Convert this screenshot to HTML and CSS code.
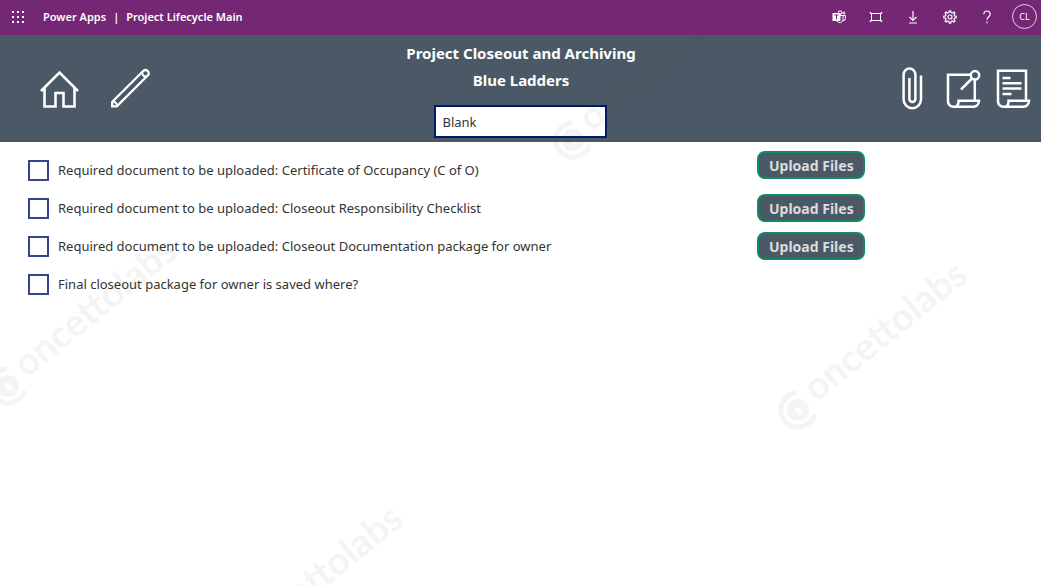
FILE: index.html
```html
<!DOCTYPE html>
<html lang="en">
<head>
    <meta charset="UTF-8">
    <meta name="viewport" content="width=device-width, initial-scale=1.0">
    <title>Project Lifecycle Main</title>
    <link rel="stylesheet" href="styles.css">
</head>
<body>
    <div class="topbar">
        <button class="icon-btn" aria-label="App launcher">
            <svg width="14" height="14" viewBox="0 0 14 14" fill="#fff">
                <path d="M1 1h2v2H1zM6 1h2v2H6zM11 1h2v2h-2zM1 6h2v2H1zM6 6h2v2H6zM11 6h2v2h-2zM1 11h2v2H1zM6 11h2v2H6zM11 11h2v2h-2z"/>
            </svg>
        </button>
        <div class="app-name">
            <span>Power Apps</span>
            <span>|</span>
            <span>Project Lifecycle Main</span>
        </div>
        <div class="tools">
            <button class="icon-btn" aria-label="Teams">
                <svg width="14" height="14" viewBox="0 0 14 14" fill="none" stroke="#fff">
                    <circle cx="8" cy="2.6" r="1.8"/>
                    <circle cx="11.8" cy="3.1" r="1.1"/>
                    <path d="M8 5.5h3v4a3.2 3.2 0 0 1-6 1.5M11 5.5h2.4v3a2 2 0 0 1-2.4 2"/>
                    <rect x="0.5" y="3" width="8" height="8" rx="0.5" fill="#fff" stroke="none"/>
                    <path d="M2.4 5h4.2M4.5 5v4.4" stroke="#742774"/>
                </svg>
            </button>
            <button class="icon-btn" aria-label="Fit to page">
                <svg width="14" height="14" viewBox="0 0 14 14" fill="none" stroke="#fff">
                    <rect x="2.5" y="3.5" width="9" height="7"/>
                    <path d="M3 4L.8 2.4M11 4l2.2-1.6M3 10L.8 11.6M11 10l2.2 1.6" stroke-width="1.5"/>
                </svg>
            </button>
            <button class="icon-btn" aria-label="Download">
                <svg width="14" height="14" viewBox="0 0 14 14" fill="none" stroke="#fff" stroke-width="1.2">
                    <path d="M7 1v9.5M3.5 7L7 10.5 10.5 7M3 13h8"/>
                </svg>
            </button>
            <button class="icon-btn" aria-label="Settings">
                <svg width="14" height="14" viewBox="0 0 14 14" fill="none" stroke="#fff" stroke-width="1.2" stroke-linejoin="round">
                    <path d="M6 2.5L6.2.8h1.6L8 2.5l1.4.6 1.4-1.1 1.2 1.2-1.1 1.4.6 1.4 1.7.2v1.6l-1.7.2-.6 1.4 1.1 1.4-1.2 1.2-1.4-1.1-1.4.6-.2 1.7H6.2L6 11.5l-1.4-.6L3.2 12 2 10.8l1.1-1.4L2.5 8 .8 7.8V6.2L2.5 6l.6-1.4L2 3.2 3.2 2l1.4 1.1z"/>
                    <circle cx="7" cy="7" r="2"/>
                </svg>
            </button>
            <button class="icon-btn" aria-label="Help">
                <svg width="14" height="14" viewBox="0 0 14 14" fill="none" stroke="#fff" stroke-width="1.2">
                    <path d="M3.8 4.2a3.2 3.2 0 0 1 6.4 0c0 2.4-3.2 2.8-3.2 5.6"/>
                    <path d="M7 11.6v1.6"/>
                </svg>
            </button>
            <button class="avatar">CL</button>
        </div>
    </div>

    <header class="header">
        <div class="header-icons">
            <button class="big-btn" aria-label="Home">
                <svg width="40" height="44" viewBox="0 0 40 44" fill="none" stroke="#fff" stroke-width="2.6">
                    <path d="M1 24L19.5 5.5 38 24"/>
                    <path d="M4.5 21v18.5h11V26h8v13.5h11V21"/>
                </svg>
            </button>
            <button class="big-btn" aria-label="Edit">
                <svg width="40" height="44" viewBox="0 0 40 44" fill="none" stroke="#fff" stroke-width="2.3">
                    <path d="M2.2 39.3V35L33.4 3.8a3.2 3.2 0 0 1 4.5 4.5L6.8 39.3z"/>
                    <path d="M3 35a3.2 3.2 0 0 1 3.8 3.8M32.4 5.2a3.4 3.4 0 0 0 4.2 4.2" stroke-width="2"/>
                </svg>
            </button>
        </div>
        <div class="header-title">
            <h1>Project Closeout and Archiving</h1>
            <h2>Blue Ladders</h2>
            <input type="text" value="Blank" aria-label="Closeout status" spellcheck="false">
        </div>
        <div class="header-icons right">
            <button class="big-btn" aria-label="Attachments">
                <svg width="40" height="44" viewBox="0 0 40 44" fill="none" stroke="#fff" stroke-width="2.5">
                    <path d="M26 8.5v24a8.7 8.7 0 0 1-17.4 0V7.5a5.8 5.8 0 0 1 11.8 0V32a3 3 0 0 1-6 0V11"/>
                </svg>
            </button>
            <button class="big-btn" aria-label="Add note">
                <svg width="40" height="44" viewBox="0 0 40 44" fill="none" stroke="#fff" stroke-width="2.5">
                    <path d="M25.5 7.7H3V34a5.5 5.5 0 0 0 5.5 5.8h20a6 6 0 0 0 5.5-6H13.5v1.5a4.5 4.5 0 0 1-5 4.5M29.8 13v20"/>
                    <circle cx="30" cy="8.3" r="4.2"/>
                    <path d="M27 11.5L16 22.5"/>
                </svg>
            </button>
            <button class="big-btn" aria-label="Document">
                <svg width="40" height="44" viewBox="0 0 40 44" fill="none" stroke="#fff" stroke-width="2.5">
                    <path d="M31 33.5V3.8H3V34a5.5 5.5 0 0 0 5.5 5.8h20a6 6 0 0 0 5.5-6H13.5v1.5a4.5 4.5 0 0 1-5 4.5"/>
                    <path d="M7.5 11h8M7.5 16.2h19M7.5 21.5h19M7.5 27h9"/>
                </svg>
            </button>
        </div>
    </header>

    <main class="checklist">
        <div class="row first">
            <label><input type="checkbox">Required document to be uploaded: Certificate of Occupancy (C of O)</label>
            <button class="upload">Upload Files</button>
        </div>
        <div class="row">
            <label><input type="checkbox">Required document to be uploaded: Closeout Responsibility Checklist</label>
            <button class="upload">Upload Files</button>
        </div>
        <div class="row">
            <label><input type="checkbox">Required document to be uploaded: Closeout Documentation package for owner</label>
            <button class="upload">Upload Files</button>
        </div>
        <div class="row">
            <label><input type="checkbox">Final closeout package for owner is saved where?</label>
        </div>
    </main>

    <!-- watermark over the whole page -->
    <svg class="watermark" aria-hidden="true">
        <defs>
            <g id="mark" transform="rotate(-39)">
                <path d="M10 -14A17.2 17.2 0 1 0 10 14" fill="none" stroke="#444" stroke-width="5"/>
                <path d="M-11 0a11 11 0 1 0 22 0a11 11 0 1 0 -22 0M-3 -1l3 -3 3 3 -1 6h-4z" fill-rule="evenodd"/>
                <text x="19" y="6">oncettolabs</text>
            </g>
        </defs>
        <use href="#mark" x="8" y="386"/>
        <use href="#mark" x="573" y="140"/>
        <use href="#mark" x="798" y="410"/>
        <use href="#mark" x="234" y="654"/>
    </svg>
</body>
</html>
```
FILE: styles.css
```css
*{
    padding: 0;
    margin: 0;
    box-sizing: border-box;
    font-family: 'Noto Sans', 'Open Sans', sans-serif;
}
body{
    position: relative;
    min-height: 100vh;
    background: #fff;
    color: #333;
}
button{
    border: 0;
    background: none;
    cursor: pointer;
}
svg{
    display: block;
}
/* purple bar */
.topbar{
    display: flex;
    align-items: center;
    height: 35px;
    padding: 0 4px 2px 6px;
    background: #742774;
    color: #fff;
}
.icon-btn{
    display: flex;
    align-items: center;
    justify-content: center;
    width: 24px;
    height: 24px;
}
.app-name{
    display: flex;
    gap: 7px;
    margin-left: 13px;
    font-size: 11px;
    font-weight: 600;
}
.tools{
    display: flex;
    align-items: center;
    gap: 13px;
    margin-left: auto;
}
.avatar{
    width: 25px;
    height: 25px;
    border: 1px solid #e3d0e3;
    border-radius: 50%;
    color: #fff;
    font-size: 9px;
}
/* header */
.header{
    display: grid;
    grid-template-columns: 1fr auto 1fr;
    align-items: center;
    padding: 5px 6px 4px 40px;
    background: #4a5965;
    color: #fff;
}
.header-icons{
    display: flex;
    gap: 30px;
}
.header-icons.right{
    justify-content: flex-end;
    gap: 10px;
}
.header-title{
    display: flex;
    flex-direction: column;
    align-items: center;
    margin-right: 33px;
}
.header-title h1,
.header-title h2{
    font-size: 15px;
    line-height: 27px;
    font-weight: 700;
}
.header-title input{
    width: 173px;
    height: 33px;
    margin-top: 11px;
    padding: 0 6px;
    border: 2px solid #001a6b;
    background: #fff;
    color: #333;
    font-size: 13px;
    outline: 0;
}
/* list of documents */
.checklist{
    padding: 9px 0 0 28px;
}
.row{
    display: grid;
    grid-template-columns: 18fr 7fr;
    align-items: center;
    height: 38px;
}
.row.first .upload{
    align-self: start;
}
.row label{
    display: flex;
    align-items: center;
    gap: 9px;
    font-size: 13px;
}
.row input{
    appearance: none;
    width: 21px;
    height: 21px;
    border: 2px solid #37438f;
    background: #fff;
}
.upload{
    width: 108px;
    height: 28px;
    border: 2px solid #128a66;
    border-radius: 8px;
    background: #4a5965;
    color: #dcdcdc;
    font-size: 14px;
    font-weight: 700;
}
.watermark{
    position: absolute;
    inset: 0;
    width: 100%;
    height: 100%;
    fill: #444;
    opacity: 0.05;
    pointer-events: none;
}
.watermark text{
    font-family: Lato, sans-serif;
    font-size: 38px;
    font-weight: 700;
}
```
